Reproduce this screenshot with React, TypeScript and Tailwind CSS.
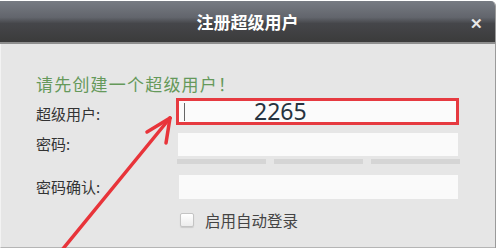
import React from "react";

const cjk = { fontFamily: '"Noto Sans CJK SC", "Noto Sans", sans-serif' };

export default function App() {
  return (
    <div className="relative w-[500px] h-[248px] bg-white overflow-hidden" style={cjk}>
      <div className="w-[496px] h-[248px] pt-px">
        <div className="h-full flex flex-col rounded-tr-[5px] overflow-hidden border-r border-[#9a9a9a]">
          {/* Title bar */}
          <div className="h-[43px] shrink-0 flex items-center justify-center relative bg-[linear-gradient(to_bottom,#777b83_0%,#62656c_40%,#45464a_55%,#3b3b3b_100%)] border-b-2 border-[#8e8e8e]">
            <span className="text-white text-[17px] font-bold leading-none">注册超级用户</span>
            <span className="absolute right-[12px] top-[14px] text-[#e8e8e8] text-[15px] font-bold leading-none">✕</span>
          </div>
          {/* Body */}
          <div className="flex-1 bg-[#e6e6e6] border-l border-[#f3f3f3] border-b border-b-[#b5b5b5] pl-[35px] pt-[30px]">
            <div className="h-[20px] text-[17px] leading-[20px] tracking-[1.2px] text-[#65995a]">请先创建一个超级用户！</div>
            <div className="mt-[4px] flex">
              <div className="w-[140px] h-[27px] pt-[7px] text-[15px] leading-[18px] text-[#333]">超级用户:</div>
              <div className="w-[283px] h-[27px] border-[3px] border-[#e63a40] bg-[#fbfbfb] flex items-center">
                <div className="ml-[5px] w-px h-[18px] bg-[#666]" />
                <span className="ml-[69px] text-[23px] leading-none text-[#263340]" style={{ fontFamily: '"Noto Sans", sans-serif' }}>2265</span>
              </div>
            </div>
            <div className="mt-[8px] flex">
              <div className="w-[142px] h-[23px] flex items-center text-[15px] text-[#333]">密码:</div>
              <div className="w-[280px] h-[23px] bg-[#fafafa]" />
            </div>
            <div className="mt-[3px] flex pl-[141px] gap-[8px]">
              <div className="w-[89px] h-[5px] bg-[#d5d5d5]" />
              <div className="w-[89px] h-[5px] bg-[#d5d5d5]" />
              <div className="w-[89px] h-[5px] bg-[#d5d5d5]" />
            </div>
            <div className="mt-[11px] flex">
              <div className="w-[143px] h-[24px] flex items-center text-[15px] text-[#333]">密码确认:</div>
              <div className="w-[279px] h-[24px] bg-[#fafafa]" />
            </div>
            <div className="mt-[12px] flex items-center pl-[144px]">
              <div className="w-[14px] h-[14px] rounded-[2px] border border-[#c4c4c4] bg-[linear-gradient(to_bottom,#ffffff,#ececec)] shadow-[0_1px_1px_rgba(0,0,0,0.12)]" />
              <span className="ml-[11px] text-[15.5px] leading-[18px] text-[#444]">启用自动登录</span>
            </div>
          </div>
        </div>
      </div>
      {/* Red annotation arrow */}
      <svg className="absolute left-0 top-0 pointer-events-none" width="500" height="248" viewBox="0 0 500 248">
        <g stroke="#e8343a" strokeWidth="3.5" strokeLinecap="round" fill="none">
          <line x1="62" y1="250" x2="170" y2="118" />
          <line x1="170" y1="118" x2="147" y2="132" />
          <line x1="170" y1="118" x2="166" y2="143" />
        </g>
      </svg>
    </div>
  );
}
